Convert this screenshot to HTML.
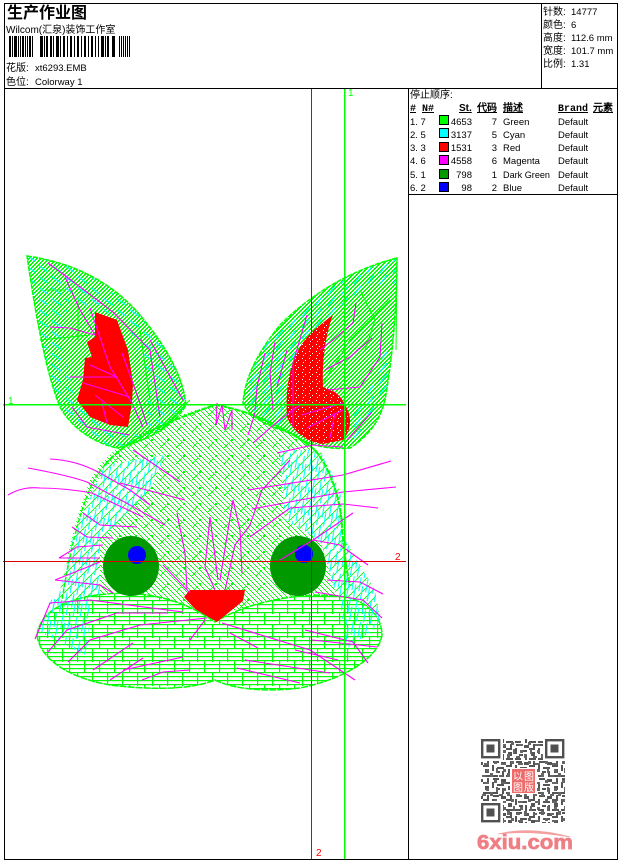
<!DOCTYPE html>
<html><head><meta charset="utf-8">
<style>
html,body{margin:0;padding:0;background:#fff}
svg{display:block}
text{font-family:"Liberation Sans","WenQuanYi Zen Hei","Noto Sans CJK SC",sans-serif;font-size:9.5px;fill:#000}
.c{font-size:10px}
.m{font-family:"Liberation Mono","WenQuanYi Zen Hei",monospace;font-weight:bold;font-size:10px}
</style></head><body>
<svg width="620" height="860" viewBox="0 0 620 860" xmlns="http://www.w3.org/2000/svg">
<defs>
<pattern id="h" width="5" height="5" patternUnits="userSpaceOnUse">
<path d="M0 0h1v1h-1zM1 1h1v1h-1zM2 2h1v1h-1zM3 3h1v1h-1zM4 4h1v1h-1z" fill="#0f0"/>
</pattern>
<pattern id="e" width="4" height="4" patternUnits="userSpaceOnUse">
<path d="M2 0h2v1h-2zM1 1h2v1h-2zM0 2h2v1h-2zM3 3h1v1h-1zM0 3h1v1h-1z" fill="#0f0"/>
</pattern>
<pattern id="lat" width="16" height="16" patternUnits="userSpaceOnUse">
<rect x="7" y="7" width="2" height="2" fill="#0f0"/>
<path d="M0 16L6 10" stroke="#0f0" stroke-width=".8"/>
</pattern>
<pattern id="ch" width="14" height="4" patternUnits="userSpaceOnUse">
<rect width="14" height="1.2" fill="#0f0"/>
</pattern>
<pattern id="cv" width="15" height="24" patternUnits="userSpaceOnUse">
<rect x="2" y="0" width="1.2" height="14" fill="#0f0"/><rect x="9" y="12" width="1.2" height="12" fill="#0f0"/>
</pattern>
<pattern id="cy" width="13" height="11" patternUnits="userSpaceOnUse">
<path d="M-1 1L9 8" stroke="#0ff" stroke-width="1.2" fill="none"/>
</pattern>
<pattern id="cyr" width="13" height="11" patternUnits="userSpaceOnUse">
<path d="M10 0L3 9" stroke="#0ff" stroke-width="1.2" fill="none"/>
</pattern>
<pattern id="cy2" width="7" height="22" patternUnits="userSpaceOnUse" patternTransform="rotate(10)">
<path d="M1 0V14M4 8V22" stroke="#0ff" stroke-width="1.1" fill="none"/>
</pattern>
<pattern id="gz" width="9" height="9" patternUnits="userSpaceOnUse">
<path d="M0 9L9 0" stroke="#0f0" stroke-width=".9"/>
</pattern>
<pattern id="wd" width="7" height="7" patternUnits="userSpaceOnUse">
<rect x="1" y="1" width="1" height="1" fill="#fff"/><rect x="4" y="3" width="1" height="1" fill="#fff"/><rect x="2" y="5" width="1" height="1" fill="#fff"/>
</pattern>
<pattern id="qa" width="23" height="17" patternUnits="userSpaceOnUse">
<path d="M0 0h6v2h-6zM9 0h2v6h-2zM14 2h7v2h-7zM2 4h4v4h-4zM13 6h4v2h-4zM19 6h2v6h-2zM0 10h7v2h-7zM9 10h6v2h-6zM4 13h2v4h-2zM10 13h6v2h-6zM18 14h5v3h-5z" fill="#555"/>
</pattern>
<pattern id="qb" width="17" height="19" patternUnits="userSpaceOnUse">
<path d="M1 1h3v3h-3zM8 3h5v2h-5zM3 8h2v5h-2zM10 9h3v3h-3zM14 13h3v4h-3zM6 15h4v2h-4z" fill="#666"/>
</pattern>
<clipPath id="earL"><path d="M27 256C70 262 110 280 140 315C165 345 183 375 186 405C175 425 150 440 117 448C90 442 70 425 60 407C45 370 35 310 27 256Z"/></clipPath>
<clipPath id="earR"><path d="M397 258C350 270 310 295 280 325C260 350 245 375 243 403C250 420 275 428 295 435C305 445 330 450 350 448C370 435 380 420 385 400C392 360 397 310 397 258Z"/></clipPath>
</defs>
<rect width="620" height="860" fill="#fff"/>

<!-- ears -->
<path d="M27 256C70 262 110 280 140 315C165 345 183 375 186 405C175 425 150 440 117 448C90 442 70 425 60 407C45 370 35 310 27 256Z" fill="url(#e)"/>
<path d="M397 258C350 270 310 295 280 325C260 350 245 375 243 403C250 420 275 428 295 435C305 445 330 450 350 448C370 435 380 420 385 400C392 360 397 310 397 258Z" fill="url(#e)"/>
<g clip-path="url(#earL)">
<path d="M20 250L75 262L135 315L95 312L70 295L62 340L75 400L105 430L140 435L125 455L60 420L35 350Z" fill="url(#cy)"/>
<path d="M110 290L150 320L190 400L190 430L145 435L150 380L135 340Z" fill="url(#cy)"/>
</g>
<g clip-path="url(#earR)">
<path d="M400 255L350 268L310 295L270 330L240 400L290 440L285 385L300 345L335 310L370 285L398 285Z" fill="url(#cyr)"/>
<path d="M398 320L392 380L350 450L348 425L375 375Z" fill="url(#cyr)"/>
</g>
<path d="M27 256C70 262 110 280 140 315C165 345 183 375 186 405C175 425 150 440 117 448C90 442 70 425 60 407C45 370 35 310 27 256Z" fill="none" stroke="#0f0" stroke-width="1.5" stroke-dasharray="5 1"/>
<path d="M397 258C350 270 310 295 280 325C260 350 245 375 243 403C250 420 275 428 295 435C305 445 330 450 350 448C370 435 380 420 385 400C392 360 397 310 397 258Z" fill="none" stroke="#0f0" stroke-width="1.5" stroke-dasharray="5 1"/>
<path d="M78 300L78 340M40 340L90 335M140 330L150 400M190 400L160 430M397 258L396 350M300 420L350 340L390 300M360 290L375 320L365 350M45 290L65 290" fill="none" stroke="#0f0" stroke-width="1"/>

<!-- head -->
<path d="M215 405C250 410 290 430 315 450C335 475 342 510 342 530C345 555 346 570 350 585L370 610L60 610C62 570 75 520 90 480C105 450 150 420 215 405Z" fill="url(#h)"/>
<path d="M215 405C250 410 290 430 315 450L320 530L270 590L215 625L150 590L110 530L105 470C125 440 170 420 215 405Z" fill="url(#lat)"/>
<path d="M105 465L165 455L150 490L100 540L100 590L85 650L37 640L60 590L75 530Z" fill="#fff"/>
<path d="M105 465L165 455L150 490L100 540L100 590L85 650L37 640L60 590L75 530Z" fill="url(#gz)"/>
<path d="M105 465L165 455L150 490L100 540L100 590L85 650L37 640L60 590L75 530Z" fill="url(#cy2)"/>
<path d="M280 450L320 450L340 490L345 540L375 590L382 630L340 650L335 590L320 540L285 520Z" fill="#fff"/>
<path d="M280 450L320 450L340 490L345 540L375 590L382 630L340 650L335 590L320 540L285 520Z" fill="url(#gz)"/>
<path d="M280 450L320 450L340 490L345 540L375 590L382 630L340 650L335 590L320 540L285 520Z" fill="url(#cy2)"/>
<path d="M105 465C125 440 170 420 215 405C250 410 290 430 315 450C335 475 342 510 342 530C345 555 346 570 350 585" fill="none" stroke="#0f0" stroke-width="2" stroke-dasharray="6 1"/>
<path d="M105 465C90 480 75 520 62 600" fill="none" stroke="#0f0" stroke-width="1.5" stroke-dasharray="4 2"/>

<!-- cheeks -->
<path d="M37 635C40 615 55 605 85 597C120 590 170 590 215 622C250 600 310 590 350 598C372 605 382 620 382 635C378 660 340 680 300 688C270 692 235 690 215 680C190 690 150 690 110 685C70 678 40 660 37 635Z" fill="#fff"/>
<path d="M37 635C40 615 55 605 85 597C120 590 170 590 215 622C250 600 310 590 350 598C372 605 382 620 382 635C378 660 340 680 300 688C270 692 235 690 215 680C190 690 150 690 110 685C70 678 40 660 37 635Z" fill="url(#ch)"/>
<path d="M37 635C40 615 55 605 85 597C120 590 170 590 215 622C250 600 310 590 350 598C372 605 382 620 382 635C378 660 340 680 300 688C270 692 235 690 215 680C190 690 150 690 110 685C70 678 40 660 37 635Z" fill="url(#cv)"/>
<path d="M37 635C40 615 55 605 85 597C120 590 170 590 215 622C250 600 310 590 350 598C372 605 382 620 382 635C378 660 340 680 300 688C270 692 235 690 215 680C190 690 150 690 110 685C70 678 40 660 37 635Z" fill="none" stroke="#0f0" stroke-width="1.5" stroke-dasharray="7 1"/>
<path d="M40 632L50 600L95 590L85 655L75 650Z" fill="url(#cy2)"/>
<path d="M340 600L372 595L380 625L345 650Z" fill="url(#cy2)"/>

<!-- red -->
<path d="M95 312L117 320L128 350L133 383L132 403L128 427L110 425L90 417L77 400L83 380L85 358L92 357L87 342L95 337Z" fill="#f00"/>
<path d="M333 315C325 335 322 365 323 387C335 390 342 397 345 405C352 415 352 430 343 440L323 444C305 442 292 430 287 417C285 390 290 365 297 353C305 335 320 325 333 315Z" fill="#f00"/>
<path d="M333 315C325 335 322 365 323 387C335 390 342 397 345 405C352 415 352 430 343 440L323 444C305 442 292 430 287 417C285 390 290 365 297 353C305 335 320 325 333 315Z" fill="url(#wd)"/>
<path d="M190 590L245 590L243 601L217 622L195 609L184 597Z" fill="#f00"/>

<!-- eyes -->
<ellipse cx="131" cy="566" rx="28" ry="30" fill="#090"/>
<ellipse cx="298" cy="566" rx="28" ry="30" fill="#090"/>
<ellipse cx="137" cy="555" rx="9" ry="9" fill="#00f"/>
<ellipse cx="304" cy="554" rx="9" ry="9" fill="#00f"/>

<!-- magenta stitches -->
<g fill="none" stroke="#f0f" stroke-width="1.1">
<path d="M48 263L67 277L113 312L150 350L160 417M65 277L80 310L95 335M50 327L70 328L95 335M90 308L110 367L132 403L143 427M122 353L140 403L147 425M70 377L117 377L90 365M72 407L87 427L130 435M95 395L123 417M102 403L107 423M150 340L183 400M83 383L130 397"/>
<path d="M356 303L353 323L333 340L320 350M372 338L350 357L325 370M382 323L380 357L360 387L327 390M307 315L293 363L293 427M275 342L270 373L273 410M265 353L257 387L255 410M287 350L277 387M302 415L343 403M307 428L343 410M330 438L335 413M372 412L347 440M253 443L277 422L300 405M248 435L255 413M277 453L313 445L343 447"/>
<path d="M217 403L216 425L222 405L225 430L232 410L232 430M133 450L180 482M120 483L185 500"/>
<path d="M50 459C70 460 85 465 100 473L130 490L150 505M28 468C50 472 70 476 87 482L130 505L165 525M8 495C20 488 30 487 40 488C60 488 75 490 92 493L143 517M83 513L100 525L137 527M72 527L87 537L113 538M59 558L77 547L103 545M59 558L100 558M55 580L100 562M55 580L100 585L113 593"/>
<path d="M391 461L343 475L248 490M396 487L343 492L252 509M378 508L343 504L290 508L250 537M353 513L313 540L280 560M368 565L340 545L313 540M383 594L360 582L327 580M382 618L363 600L315 592"/>
<path d="M233 500L228 530L220 580M233 500L240 530L242 573M210 517L205 567L215 590M210 517L218 580M177 513L185 553L187 590M163 565L190 593M290 460L262 490L250 525M250 525L235 545L225 590"/>
<path d="M35 639L50 603L90 600L183 612M48 652L67 630L117 613L167 613M68 662L90 640L140 625L207 618M93 670L133 643M110 680L143 658M142 680L163 672L190 670M123 670L183 657"/>
<path d="M222 623L310 650L355 680M300 683L237 668M245 660L330 673M295 650L338 660M305 630L353 642L368 663M312 640L377 647M230 633L258 648M205 620L190 640"/>
</g>

<!-- guide lines -->
<g shape-rendering="crispEdges">
<rect x="344" y="88" width="1.4" height="771" fill="#0f0"/>
<rect x="311" y="88" width="1" height="771" fill="#e00000"/>
<rect x="3" y="404" width="403" height="1.4" fill="#0f0"/>
<rect x="3" y="561" width="403" height="1" fill="#e00000"/>
<rect x="4" y="3" width="614" height="1" fill="#000"/>
<rect x="4" y="88" width="614" height="1" fill="#000"/>
<rect x="4" y="3" width="1" height="857" fill="#000"/>
<rect x="617" y="3" width="1" height="857" fill="#000"/>
<rect x="4" y="859" width="614" height="1" fill="#000"/>
<rect x="541" y="3" width="1" height="85" fill="#000"/>
<rect x="408" y="88" width="1" height="771" fill="#000"/>
<rect x="408" y="194" width="210" height="1" fill="#000"/>
</g>
<text class="c" x="348" y="96" style="fill:#0f0">1</text>
<text class="c" x="8" y="404" style="fill:#0f0">1</text>
<text class="c" x="395" y="560" style="fill:#f00">2</text>
<text class="c" x="316" y="856" style="fill:#f00">2</text>

<!-- header -->
<text x="7" y="18" style="font-size:16px;font-weight:bold">生产作业图</text>
<text class="c" x="6" y="33">Wilcom(汇泉)装饰工作室</text>
<g shape-rendering="crispEdges" fill="#000">
<path d="M9 36h2v21h-2zM12 36h1v21h-1zM14 36h3v21h-3zM18 36h1v21h-1zM20 36h1v21h-1zM22 36h2v21h-2zM25 36h1v21h-1zM27 36h1v21h-1zM29 36h2v21h-2zM32 36h1v21h-1zM40 36h3v21h-3zM44 36h1v21h-1zM46 36h2v21h-2zM50 36h2v21h-2zM53 36h1v21h-1zM56 36h3v21h-3zM60 36h1v21h-1zM63 36h2v21h-2zM67 36h1v21h-1zM70 36h2v21h-2zM74 36h1v21h-1zM77 36h2v21h-2zM81 36h1v21h-1zM84 36h2v21h-2zM88 36h1v21h-1zM91 36h2v21h-2zM95 36h1v21h-1zM98 36h1v21h-1zM101 36h3v21h-3zM105 36h1v21h-1zM107 36h2v21h-2zM112 36h3v21h-3zM119 36h1v21h-1zM121 36h1v21h-1zM123 36h1v21h-1zM125 36h1v21h-1zM127 36h1v21h-1zM129 36h1v21h-1z"/>
</g>
<text class="c" x="6" y="71">花版:</text><text x="35" y="71">xt6293.EMB</text>
<text class="c" x="6" y="85">色位:</text><text x="35" y="85">Colorway 1</text>

<text class="c" x="543" y="15">针数:</text><text x="571" y="15">14777</text>
<text class="c" x="543" y="28">颜色:</text><text x="571" y="28">6</text>
<text class="c" x="543" y="41">高度:</text><text x="571" y="41">112.6 mm</text>
<text class="c" x="543" y="54">宽度:</text><text x="571" y="54">101.7 mm</text>
<text class="c" x="543" y="67">比例:</text><text x="571" y="67">1.31</text>

<text class="c" x="410" y="98">停止顺序:</text>
<text class="m" x="410" y="111" text-decoration="underline">#</text>
<text class="m" x="422" y="111" text-decoration="underline">N#</text>
<text x="459" y="111" text-decoration="underline" style="font-weight:bold;font-size:10px">St.</text>
<text class="m" x="477" y="111" text-decoration="underline">代码</text>
<text class="m" x="503" y="111" text-decoration="underline">描述</text>
<text class="m" x="558" y="111" text-decoration="underline">Brand</text>
<text class="m" x="593" y="111" text-decoration="underline">元素</text>

<g shape-rendering="crispEdges" stroke="#000" stroke-width="1">
<rect x="439.5" y="115.5" width="9" height="9" fill="#0f0"/>
<rect x="439.5" y="128.5" width="9" height="9" fill="#0ff"/>
<rect x="439.5" y="142.5" width="9" height="9" fill="#f00"/>
<rect x="439.5" y="155.5" width="9" height="9" fill="#f0f"/>
<rect x="439.5" y="169.5" width="9" height="9" fill="#090"/>
<rect x="439.5" y="182.5" width="9" height="9" fill="#00f"/>
</g>
<g>
<text x="410" y="125">1. 7</text><text x="472" y="125" text-anchor="end">4653</text><text x="497" y="125" text-anchor="end">7</text><text x="503" y="125">Green</text><text x="558" y="125">Default</text>
<text x="410" y="138">2. 5</text><text x="472" y="138" text-anchor="end">3137</text><text x="497" y="138" text-anchor="end">5</text><text x="503" y="138">Cyan</text><text x="558" y="138">Default</text>
<text x="410" y="151">3. 3</text><text x="472" y="151" text-anchor="end">1531</text><text x="497" y="151" text-anchor="end">3</text><text x="503" y="151">Red</text><text x="558" y="151">Default</text>
<text x="410" y="164">4. 6</text><text x="472" y="164" text-anchor="end">4558</text><text x="497" y="164" text-anchor="end">6</text><text x="503" y="164">Magenta</text><text x="558" y="164">Default</text>
<text x="410" y="178">5. 1</text><text x="472" y="178" text-anchor="end">798</text><text x="497" y="178" text-anchor="end">1</text><text x="503" y="178" textLength="47" lengthAdjust="spacingAndGlyphs">Dark Green</text><text x="558" y="178">Default</text>
<text x="410" y="191">6. 2</text><text x="472" y="191" text-anchor="end">98</text><text x="497" y="191" text-anchor="end">2</text><text x="503" y="191">Blue</text><text x="558" y="191">Default</text>
</g>

<!-- QR -->
<rect x="481" y="739" width="84" height="84" fill="url(#qa)"/>
<rect x="481" y="739" width="84" height="84" fill="url(#qb)"/>
<g fill="#fff"><rect x="481" y="739" width="22" height="22"/><rect x="543" y="739" width="22" height="22"/><rect x="481" y="801" width="22" height="22"/></g>
<g fill="none" stroke="#505050" stroke-width="2.4">
<rect x="482.2" y="740.2" width="17" height="17"/><rect x="546.2" y="740.2" width="17" height="17"/><rect x="482.2" y="804.2" width="17" height="17"/>
</g>
<g fill="#505050"><rect x="486.5" y="744.5" width="8" height="8"/><rect x="550.5" y="744.5" width="8" height="8"/><rect x="486.5" y="808.5" width="8" height="8"/></g>
<rect x="510" y="768" width="27" height="26" fill="#fff"/>
<rect x="512" y="769" width="23" height="24" fill="#ee6b6b"/>
<text x="513" y="780" style="font-size:10px;fill:#fff">以</text><text x="524" y="780" style="font-size:10px;fill:#fff">图</text>
<text x="513" y="791" style="font-size:10px;fill:#fff">图</text><text x="524" y="791" style="font-size:10px;fill:#fff">版</text>
<path d="M498 834Q530 826 570 837Q530 830 498 834Z" fill="#f3a0a0" stroke="#f3a0a0" stroke-width=".8"/>
<text x="477" y="849" style="font-size:20px;font-weight:bold;fill:#ef7f85;stroke:#ef7f85;stroke-width:.7" textLength="96" lengthAdjust="spacingAndGlyphs">6xiu.com</text>
</svg>
</body></html>
